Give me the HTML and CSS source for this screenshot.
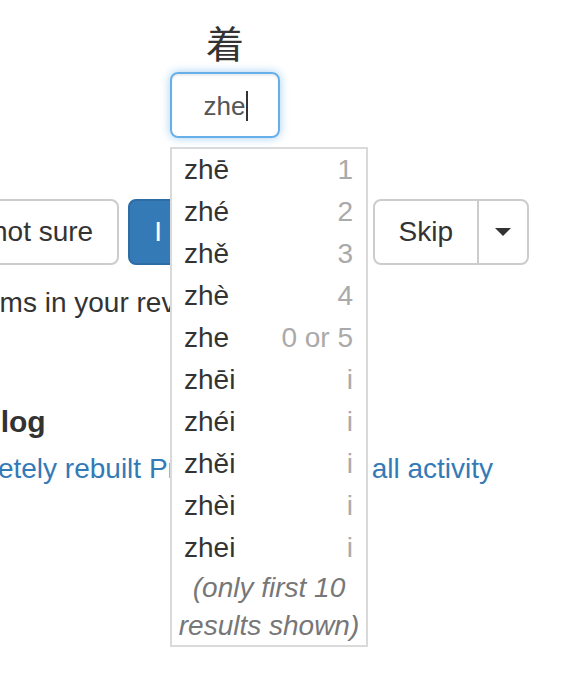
FILE: index.html
```html
<!DOCTYPE html>
<html lang="en">
<head>
    <meta charset="UTF-8">
    <meta name="viewport" content="width=device-width, initial-scale=1.0">
    <title>Review</title>
    <link rel="stylesheet" href="styles.css">
</head>
<body>
    <main class="page">
        <section class="quiz">
            <div class="hanzi">着</div>
            <div class="answer">
                <div class="answer-input" role="textbox"><span>zhe</span><span class="cursor"></span></div>
                <ul class="suggest">
                    <li><span>zhē</span><span class="tone">1</span></li>
                    <li><span>zhé</span><span class="tone">2</span></li>
                    <li><span>zhě</span><span class="tone">3</span></li>
                    <li><span>zhè</span><span class="tone">4</span></li>
                    <li><span>zhe</span><span class="tone">0 or 5</span></li>
                    <li><span>zhēi</span><span class="tone">i</span></li>
                    <li><span>zhéi</span><span class="tone">i</span></li>
                    <li><span>zhěi</span><span class="tone">i</span></li>
                    <li><span>zhèi</span><span class="tone">i</span></li>
                    <li><span>zhei</span><span class="tone">i</span></li>
                    <li class="note">(only first 10 results shown)</li>
                </ul>
            </div>
            <div class="actions">
                <button class="btn">not sure</button>
                <button class="btn btn-primary">I know this</button>
                <div class="btn-group">
                    <button class="btn">Skip</button>
                    <button class="btn btn-toggle"><span class="caret"></span></button>
                </div>
            </div>
        </section>

        <p class="queue">items in your review queue</p>

        <h3 class="blog-title">Blog</h3>
        <div class="blog-links">
            <a href="#">Completely rebuilt Prompts</a>
            <a href="#">See all activity</a>
        </div>
    </main>
</body>
</html>
```

FILE: styles.css
```css
body {
    font-family: "Liberation Sans", Arial, sans-serif;
    font-size: 28px;
    color: #333;
    margin: 0;
    padding: 0;
}

.page {
    min-height: 100vh;
    overflow: hidden;
}

/* Carte de révision */
.quiz {
    padding-top: 20px;
}

.hanzi {
    width: 110px;
    margin-left: 170px;
    text-align: center;
    font-family: "Noto Sans CJK SC", sans-serif;
    font-size: 38px;
    line-height: 44px;
    color: #333;
}

.answer {
    position: relative;
    width: 110px;
    margin-left: 170px;
    margin-top: 8px;
}

.answer-input {
    box-sizing: border-box;
    display: flex;
    justify-content: center;
    align-items: center;
    width: 110px;
    height: 66px;
    border: 2px solid #66afe9;
    border-radius: 8px;
    box-shadow: inset 0 2px 2px rgba(0, 0, 0, 0.075), 0 0 10px rgba(102, 175, 233, 0.6);
    font-size: 26px;
    color: #555;
    padding: 2px 8px 0 10px;
}

.cursor {
    display: inline-block;
    width: 2px;
    height: 30px;
    margin-left: 1px;
    background-color: #333;
}

/* Suggestions */
.suggest {
    position: absolute;
    top: 75px;
    left: 0;
    z-index: 10;
    width: 198px;
    box-sizing: border-box;
    margin: 0;
    padding: 0;
    list-style: none;
    background-color: white;
    border: 2px solid #dadada;
}

.suggest li {
    display: flex;
    justify-content: space-between;
    padding: 0 13px 0 12px;
    line-height: 42px;
    color: #333;
}

.suggest .tone {
    color: #aaa;
}

.suggest .note {
    display: block;
    padding: 0 4px;
    text-align: center;
    font-style: italic;
    line-height: 38px;
    color: #777;
}

/* Boutons */
.actions {
    display: flex;
    align-items: center;
    gap: 9px;
    width: 563px;
    margin-left: -34px;
    margin-top: 61px;
}

.btn {
    font-family: "Liberation Sans", Arial, sans-serif;
    font-size: 28px;
    line-height: 40px;
    padding: 11px 24px;
    color: #333;
    background-color: white;
    border: 2px solid #ccc;
    border-radius: 8px;
    cursor: pointer;
}

.btn-primary {
    color: white;
    background-color: #337ab7;
    border-color: #2e6da4;
}

.btn-group {
    display: flex;
    margin-left: auto;
}

.btn-group .btn:first-child {
    border-top-right-radius: 0;
    border-bottom-right-radius: 0;
}

.btn-toggle {
    margin-left: -2px;
    padding: 11px 16px;
    border-top-left-radius: 0;
    border-bottom-left-radius: 0;
    display: flex;
    align-items: center;
    height: 66px;
}

.caret {
    display: inline-block;
    width: 0;
    height: 0;
    border-top: 8px solid #333;
    border-left: 8px solid transparent;
    border-right: 8px solid transparent;
}

/* Texte */
.queue {
    margin: 18px 0 0 -30px;
    line-height: 40px;
}

.blog-title {
    margin: 81px 0 0 -21px;
    font-size: 30px;
    line-height: 36px;
    font-weight: bold;
}

.blog-links {
    display: flex;
    justify-content: space-between;
    width: 576px;
    margin: 9px 0 0 -83px;
    line-height: 40px;
}

.blog-links a {
    color: #337ab7;
    text-decoration: none;
}
```
